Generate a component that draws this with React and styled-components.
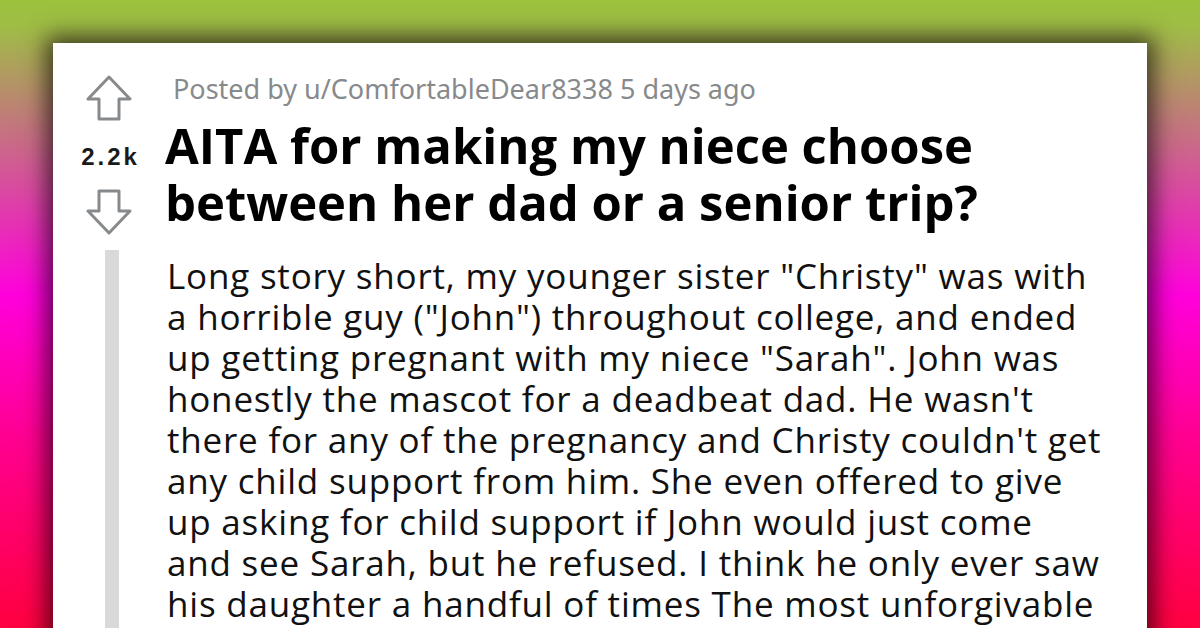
import styled, { createGlobalStyle } from "styled-components";

const GlobalStyle = createGlobalStyle`
  html, body {
    margin: 0;
    padding: 0;
    height: 628px;
    overflow: hidden;
  }
  body {
    background: linear-gradient(
      180deg,
      #9cc23d 0%,
      #9fbd45 4%,
      #ff00dc 47%,
      #ff0090 70%,
      #ff0040 100%
    );
  }
`;

const Page = styled.div`
  height: 628px;
  padding: 43px 53px 0;
  box-sizing: border-box;
  overflow: hidden;
`;

const Card = styled.div`
  display: flex;
  background: #ffffff;
  height: 700px;
  box-shadow: 0 0 22px 6px rgba(0, 0, 0, 0.68);
`;

const VoteColumn = styled.div`
  width: 112px;
  flex-shrink: 0;
  display: flex;
  flex-direction: column;
  align-items: center;
  padding-top: 32px;
`;

const Score = styled.div`
  font-family: "Liberation Sans", Arial, sans-serif;
  font-weight: 700;
  font-size: 24px;
  letter-spacing: 3px;
  padding-left: 3px;
  color: #1a1a1b;
  margin: 23px 0 19px;
  line-height: 26px;
`;

const ThreadLine = styled.div`
  width: 14px;
  flex: 1;
  margin: 15px 0 0 6px;
  background: #d9d9d9;
`;

const Content = styled.div`
  flex: 1;
  padding-top: 30px;
`;

const Meta = styled.div`
  font-family: "Noto Sans", "Open Sans", sans-serif;
  font-size: 27px;
  line-height: 32px;
  color: #878a8c;
  padding-left: 8px;
`;

const Title = styled.h1`
  margin: 12px 0 0;
  font-family: "Open Sans", "Noto Sans", sans-serif;
  font-weight: 700;
  font-size: 49px;
  line-height: 57px;
  color: #000000;
`;

const Body = styled.div`
  margin-top: 24px;
  padding-left: 2px;
  font-family: "Open Sans", "Noto Sans", sans-serif;
  font-size: 35px;
  letter-spacing: 0.8px;
  line-height: 41px;
  color: #111111;
`;

const Line = styled.span`
  display: block;
  white-space: nowrap;
`;

function Arrow({ down }) {
  return (
    <svg
      width="46"
      height="46"
      viewBox="0 0 46 46"
      style={down ? { transform: "rotate(180deg)" } : undefined}
    >
      <path
        d="M23 2 L44 24 L33 24 L33 44 L13 44 L13 24 L2 24 Z"
        fill="none"
        stroke="#878a8c"
        strokeWidth="3"
        strokeLinejoin="round"
      />
    </svg>
  );
}

const titleLines = [
  "AITA for making my niece choose",
  "between her dad or a senior trip?",
];

const bodyLines = [
  "Long story short, my younger sister \"Christy\" was with",
  "a horrible guy (\"John\") throughout college, and ended",
  "up getting pregnant with my niece \"Sarah\". John was",
  "honestly the mascot for a deadbeat dad. He wasn't",
  "there for any of the pregnancy and Christy couldn't get",
  "any child support from him. She even offered to give",
  "up asking for child support if John would just come",
  "and see Sarah, but he refused. I think he only ever saw",
  "his daughter a handful of times The most unforgivable",
];

function App() {
  return (
    <>
      <GlobalStyle />
      <Page>
        <Card>
          <VoteColumn>
            <Arrow />
            <Score>2.2k</Score>
            <Arrow down />
            <ThreadLine />
          </VoteColumn>
          <Content>
            <Meta>Posted by u/ComfortableDear8338 5 days ago</Meta>
            <Title>
              {titleLines.map(l => (
                <Line key={l}>{l}</Line>
              ))}
            </Title>
            <Body>
              {bodyLines.map(l => (
                <Line key={l}>{l}</Line>
              ))}
            </Body>
          </Content>
        </Card>
      </Page>
    </>
  );
}

export default App;
